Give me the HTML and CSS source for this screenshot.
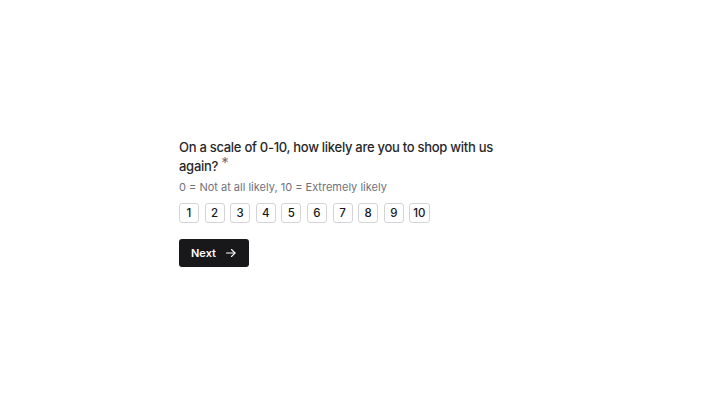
FILE: index.html
```html
<!DOCTYPE html>
<html lang="en">
<head>
    <meta charset="UTF-8">
    <meta name="viewport" content="width=device-width, initial-scale=1.0">
    <link rel="stylesheet" href="styles.css">
</head>
<body>
<div class="form">
    <div class="question">
        <p class="question-title">On a scale of 0-10, how likely are you to shop with us again? <span class="required">*</span></p>
        <p class="question-hint">0 = Not at all likely, 10 = Extremely likely</p>

        <div class="scale">
            <button class="scale-option">1</button>
            <button class="scale-option">2</button>
            <button class="scale-option">3</button>
            <button class="scale-option">4</button>
            <button class="scale-option">5</button>
            <button class="scale-option">6</button>
            <button class="scale-option">7</button>
            <button class="scale-option">8</button>
            <button class="scale-option">9</button>
            <button class="scale-option">10</button>
        </div>
    </div>

    <button class="next-button">
        Next
        <svg width="12" height="12" viewBox="0 0 24 24" fill="none" stroke="currentColor" stroke-width="2.2" stroke-linecap="round" stroke-linejoin="round">
            <path d="M3 12h17"/>
            <path d="M13 5l7 7-7 7"/>
        </svg>
    </button>
</div>
</body>
</html>
```

FILE: styles.css
```css
body {
    margin: 0;
    padding: 0;
    font-family: Inter, "Noto Sans", sans-serif;
    background-color: #ffffff;
    color: #18181b;
    display: flex;
    justify-content: center;
    align-items: center;
    min-height: 100vh;
}

.form {
    width: 362px;
    display: flex;
    flex-direction: column;
    align-items: flex-start;
    gap: 16px;
}

.question-title {
    margin: 0;
    max-width: 330px;
    font-size: 13px;
    font-weight: 500;
    line-height: 19px;
    letter-spacing: -0.28px;
    color: #27272a;
}

/* asterisk sits a little above the text line */
.required {
    display: inline-block;
    color: #71717a;
    font-size: 15px;
    font-weight: 400;
    line-height: 10px;
    vertical-align: 3px;
}

.question-hint {
    margin: 3px 0 0 0;
    font-size: 11px;
    line-height: 16px;
    color: #71717a;
}

.scale {
    display: flex;
    gap: 5.6px;
    margin-top: 8px;
}

.scale-option {
    box-sizing: border-box;
    min-width: 20px;
    height: 20px;
    padding: 0 3px;
    border: 1px solid #d4d4d8;
    border-radius: 3px;
    background-color: #ffffff;
    color: #18181b;
    font-family: inherit;
    font-size: 11.5px;
    font-weight: 500;
    cursor: pointer;
}

.next-button {
    box-sizing: border-box;
    height: 28px;
    width: 70px;
    padding: 0 12px 0 12px;
    display: flex;
    align-items: center;
    justify-content: space-between;
    border: none;
    border-radius: 3px;
    background-color: #18181b;
    color: #ffffff;
    font-family: inherit;
    font-size: 11px;
    font-weight: 600;
    cursor: pointer;
}
```
